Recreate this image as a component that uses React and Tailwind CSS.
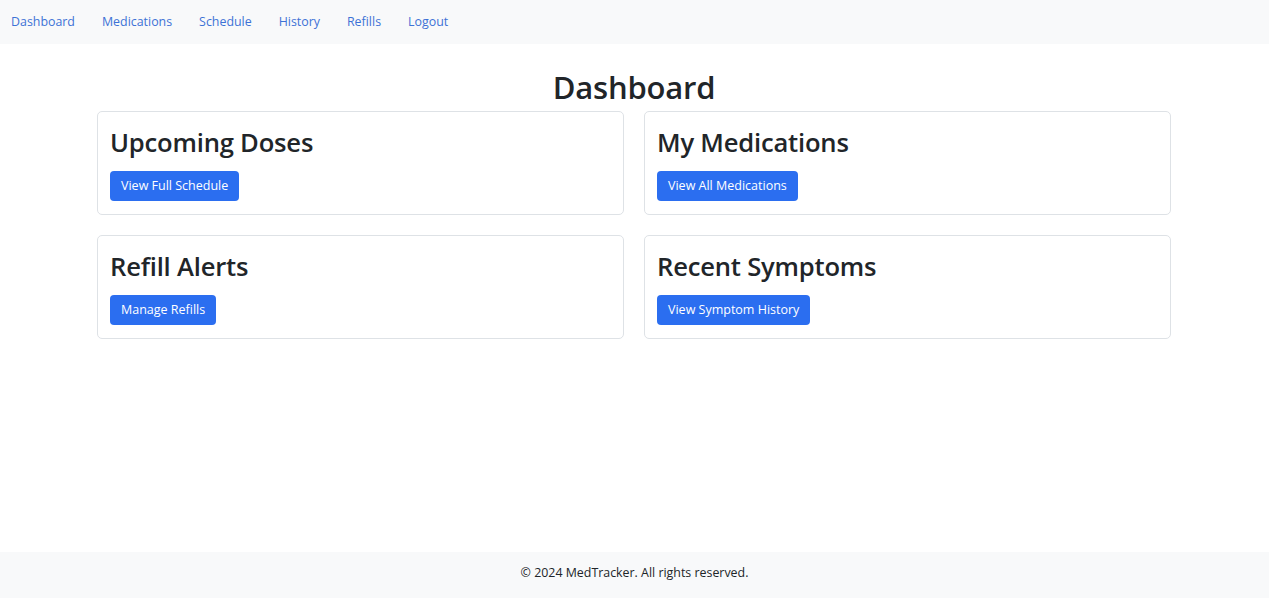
import React from 'react';

const navLinks = ['Dashboard', 'Medications', 'Schedule', 'History', 'Refills', 'Logout'];

const cards = [
    { title: 'Upcoming Doses', action: 'View Full Schedule' },
    { title: 'My Medications', action: 'View All Medications' },
    { title: 'Refill Alerts', action: 'Manage Refills' },
    { title: 'Recent Symptoms', action: 'View Symptom History' },
];

function Card({ title, action }) {
    return (
        <div className="border border-[#dee2e6] rounded-[5px] bg-white px-[12px] pt-[14px] pb-[13px]">
            <h2 className="text-[25.6px] leading-[34px] font-semibold text-[#212529] mb-[11px] tracking-[-0.2px]">{title}</h2>
            <button className="h-[30px] flex items-center bg-[#2b6ef0] text-white text-[12.5px] px-[11px] rounded-[4px]">
                {action}
            </button>
        </div>
    );
}

export default function App() {
    return (
        <div className="min-h-[598px] flex flex-col bg-white font-['Segoe_UI','Open_Sans',sans-serif] text-[#212529]">
            <nav className="h-[44px] bg-[#f8f9fa] flex items-center px-[11px] gap-[27px]">
                {navLinks.map(link => (
                    <a key={link} href="#" className="text-[12.4px] text-[#3d72d6]">{link}</a>
                ))}
            </nav>

            <main className="flex-1">
                <div className="w-[1074px] ml-[97px]">
                    <h1 className="text-center text-[31px] leading-[44px] font-semibold mt-[21px] mb-[2px] tracking-[-0.2px]">Dashboard</h1>
                    <div className="grid grid-cols-2 gap-x-[20px] gap-y-[20px]">
                        {cards.map(c => <Card key={c.title} {...c} />)}
                    </div>
                </div>
            </main>

            <footer className="h-[46px] bg-[#f8f9fa] flex items-center justify-center pb-[3px] text-[12.4px] text-[#212529]">
                © 2024 MedTracker. All rights reserved.
            </footer>
        </div>
    );
}
